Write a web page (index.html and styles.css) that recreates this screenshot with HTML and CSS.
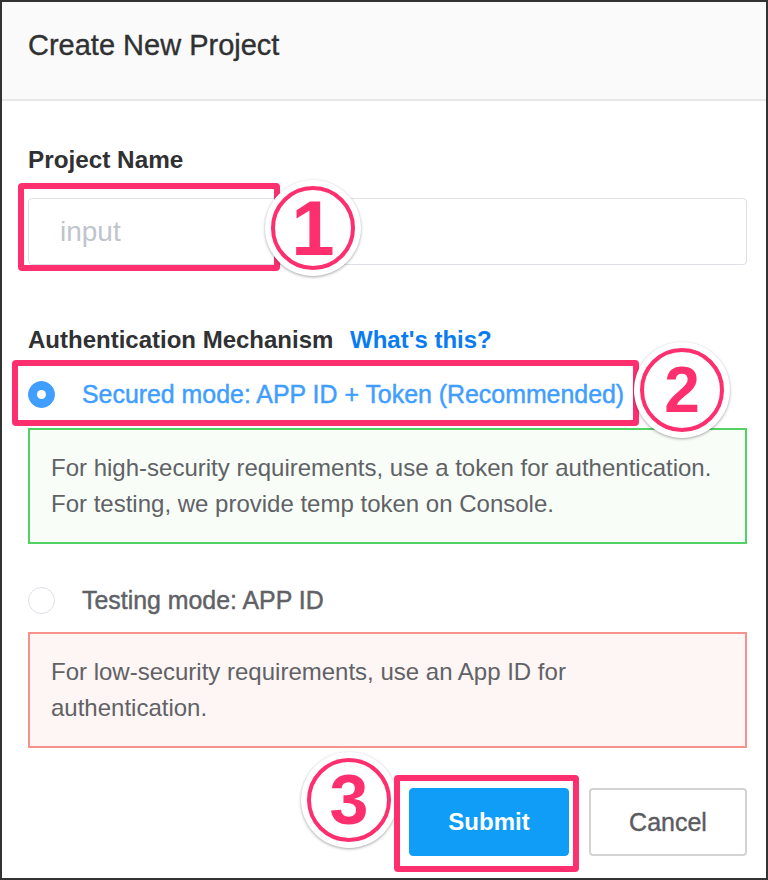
FILE: index.html
```html
<!DOCTYPE html>
<html lang="en">
<head>
<meta charset="utf-8">
<title>Create New Project</title>
<link rel="stylesheet" href="styles.css">
</head>
<body>
<div class="dialog">
  <header class="dialog-header">
    <h1 class="dialog-title">Create New Project</h1>
  </header>
  <main class="dialog-body">
    <div class="field">
      <label class="field-label field-label-name" for="pname">Project Name</label>
      <input class="text-input" id="pname" type="text" placeholder="input">
    </div>

    <div class="field field-auth">
      <div class="field-label">Authentication Mechanism <a class="help-link" href="#">What's this?</a></div>

      <label class="radio-row">
        <span class="radio radio-checked"><span class="radio-dot"></span></span>
        <span class="radio-label radio-label-active">Secured mode: APP ID + Token (Recommended)</span>
      </label>
      <div class="note note-green">For high-security requirements, use a token for authentication.<br>For testing, we provide temp token on Console.</div>

      <label class="radio-row radio-row-second">
        <span class="radio"></span>
        <span class="radio-label">Testing mode: APP ID</span>
      </label>
      <div class="note note-red">For low-security requirements, use an App ID for<br>authentication.</div>
    </div>

    <footer class="dialog-footer">
      <button class="btn btn-primary" type="button">Submit</button>
      <button class="btn btn-default" type="button">Cancel</button>
    </footer>
  </main>

  <span class="mark mark-1"></span>
  <span class="badge badge-1"><span class="badge-ring"><span class="badge-num">1</span></span></span>

  <span class="mark mark-2"></span>
  <span class="badge badge-2"><span class="badge-ring"><span class="badge-num">2</span></span></span>

  <span class="badge badge-3"><span class="badge-ring"><span class="badge-num">3</span></span></span>
  <span class="mark mark-3"></span>
</div>
</body>
</html>
```
FILE: styles.css
```css
* { box-sizing: border-box; }

html, body {
  margin: 0;
  padding: 0;
  background: #ffffff;
}

body {
  font-family: "Liberation Sans", Arial, Helvetica, sans-serif;
  color: #303133;
}

.dialog {
  position: relative;
  width: 768px;
  height: 880px;
  border: 2px solid #333333;
  background: #ffffff;
  overflow: hidden;
}

.dialog-header {
  height: 99px;
  padding: 26px 0 0 26px;
  background: #fafafa;
  border-bottom: 2px solid #e8e8e8;
}

.dialog-title {
  margin: 0;
  font-size: 29px;
  line-height: 34px;
  font-weight: normal;
  color: #303133;
  -webkit-text-stroke: 0.35px currentColor;
}

.dialog-body {
  padding: 45px 19px 0 26px;
}

.field-label {
  display: block;
  font-size: 24px;
  line-height: 28px;
  font-weight: bold;
  color: #303133;
  margin-bottom: 24px;
}

.field-label-name {
  font-size: 24.3px;
}

.text-input {
  display: block;
  width: 100%;
  height: 67px;
  margin: 0;
  padding: 0 31px;
  border: 1px solid #dcdfe6;
  border-radius: 4px;
  font-family: inherit;
  font-size: 28px;
  color: #606266;
  background: #ffffff;
  outline: none;
}

.text-input::placeholder {
  color: #c0c4cc;
}

.field-auth {
  margin-top: 61px;
}

.field-auth .field-label {
  margin-bottom: 26px;
}

.help-link {
  margin-left: 10px;
  color: #0a7cf2;
  text-decoration: none;
}

.radio-row {
  display: flex;
  align-items: center;
  height: 28px;
}

.radio-row-second {
  margin-top: 42px;
}

.radio {
  flex: none;
  width: 27px;
  height: 27px;
  border: 1px solid #dcdfe6;
  border-radius: 50%;
  background: #ffffff;
  display: flex;
  align-items: center;
  justify-content: center;
}

.radio-checked {
  background: #409eff;
  border-color: #409eff;
}

.radio-dot {
  width: 9px;
  height: 9px;
  border-radius: 50%;
  background: #ffffff;
}

.radio-label {
  margin-left: 27px;
  font-size: 24.9px;
  line-height: 28px;
  color: #606266;
  -webkit-text-stroke: 0.45px currentColor;
}

.radio-label-active {
  color: #409eff;
}

.note {
  padding: 20px 20px 20px 21px;
  font-size: 24px;
  line-height: 36px;
  color: #606266;
  border: 2px solid;
}

.note-green {
  margin-top: 20px;
  border-color: #52d262;
  background: #f8fdf8;
}

.note-red {
  margin-top: 18px;
  border-color: #f7918c;
  background: #fef5f5;
}

.dialog-footer {
  display: flex;
  justify-content: flex-end;
  gap: 20px;
  margin-top: 40px;
}

.btn {
  height: 68px;
  border-radius: 4px;
  font-family: inherit;
  font-size: 24px;
  cursor: pointer;
}

.btn-primary {
  width: 160px;
  background: #109df7;
  border: 1px solid #109df7;
  color: #ffffff;
  font-weight: bold;
}

.btn-default {
  width: 158px;
  background: #ffffff;
  border: 2px solid #d3d3d3;
  color: #5a5c60;
  font-size: 25px;
  -webkit-text-stroke: 0.4px currentColor;
}

/* annotation overlays */
.mark {
  position: absolute;
  border: 6px solid #fd2f6e;
  border-radius: 4px;
  z-index: 2;
}

.mark-1 { left: 16px; top: 181px; width: 262px; height: 88px; }
.mark-2 { left: 10px; top: 358px; width: 627px; height: 66px; }
.mark-3 { left: 392px; top: 773px; width: 185px; height: 97px; }

.badge {
  position: absolute;
  width: 96px;
  height: 96px;
  border-radius: 50%;
  background: #ffffff;
  box-shadow: 0 1px 3px rgba(0, 0, 0, 0.35);
  display: flex;
  align-items: center;
  justify-content: center;
  z-index: 3;
}

.badge-ring {
  width: 84px;
  height: 84px;
  border: 4px solid #fd2f6e;
  border-radius: 50%;
  display: flex;
  align-items: center;
  justify-content: center;
}

.badge-num {
  font-weight: bold;
  color: #fd2f6e;
  line-height: 1;
}

.badge-1 { left: 263px; top: 178px; }
.badge-1 .badge-num { font-size: 78px; }

.badge-2 { left: 632px; top: 340px; }
.badge-2 .badge-num { font-size: 64px; }

.badge-3 { left: 299px; top: 750px; z-index: 1; }
.badge-3 .badge-num { font-size: 70px; }
```
